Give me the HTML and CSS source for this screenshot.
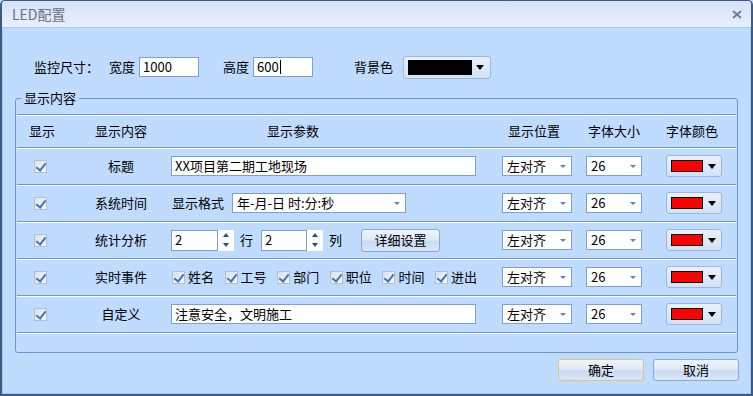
FILE: index.html
```html
<!DOCTYPE html>
<html lang="zh-CN">
<head>
    <meta charset="UTF-8">
    <title>LED配置</title>
    <link rel="stylesheet" href="styles.css">
</head>
<body>
    <div class="window">
        <div class="titlebar">
            <span class="title">LED配置</span>
            <span class="close">
                <svg width="10" height="9" viewBox="0 0 10 9"><path d="M1 1 L9 8 M9 1 L1 8" stroke="#6c7fa2" stroke-width="2" fill="none"/></svg>
            </span>
        </div>

        <div class="body">
            <div class="size-row">
                <span class="lbl-main">监控尺寸：</span>
                <span class="lbl">宽度</span>
                <span class="field w60">1000</span>
                <span class="lbl lbl-h">高度</span>
                <span class="field w60">600<i class="caret"></i></span>
                <span class="lbl lbl-bg">背景色</span>
                <span class="color-btn big"><i class="swatch black"></i><i class="tri"></i></span>
            </div>

            <fieldset class="group">
                <legend>显示内容</legend>
                <div class="table">
                    <div class="row head">
                        <div class="h1">显示</div>
                        <div class="c2">显示内容</div>
                        <div class="h3">显示参数</div>
                        <div class="h4">显示位置</div>
                        <div class="h5">字体大小</div>
                        <div>字体颜色</div>
                    </div>

                    <div class="row">
                        <div class="c1"><span class="cb"></span></div>
                        <div class="c2">标题</div>
                        <div class="c3"><span class="field w305">XX项目第二期工地现场</span></div>
                        <div><span class="select w70"><span>左对齐</span><i class="arr"></i></span></div>
                        <div><span class="select w56"><span>26</span><i class="arr"></i></span></div>
                        <div><span class="color-btn"><i class="swatch red"></i><i class="tri"></i></span></div>
                    </div>

                    <div class="row">
                        <div class="c1"><span class="cb"></span></div>
                        <div class="c2">系统时间</div>
                        <div class="c3">
                            <span class="fmt-lbl">显示格式</span>
                            <span class="select w174"><span>年-月-日 时:分:秒</span><i class="arr"></i></span>
                        </div>
                        <div><span class="select w70"><span>左对齐</span><i class="arr"></i></span></div>
                        <div><span class="select w56"><span>26</span><i class="arr"></i></span></div>
                        <div><span class="color-btn"><i class="swatch red"></i><i class="tri"></i></span></div>
                    </div>

                    <div class="row">
                        <div class="c1"><span class="cb"></span></div>
                        <div class="c2">统计分析</div>
                        <div class="c3">
                            <span class="spin"><span class="field w47">2</span><span class="spin-btns"><i class="up"></i><i class="down"></i></span></span>
                            <span class="unit">行</span>
                            <span class="spin"><span class="field w46">2</span><span class="spin-btns"><i class="up"></i><i class="down"></i></span></span>
                            <span class="unit">列</span>
                            <span class="btn small">详细设置</span>
                        </div>
                        <div><span class="select w70"><span>左对齐</span><i class="arr"></i></span></div>
                        <div><span class="select w56"><span>26</span><i class="arr"></i></span></div>
                        <div><span class="color-btn"><i class="swatch red"></i><i class="tri"></i></span></div>
                    </div>

                    <div class="row">
                        <div class="c1"><span class="cb"></span></div>
                        <div class="c2">实时事件</div>
                        <div class="c3 checks">
                            <span class="chk"><span class="cb"></span>姓名</span>
                            <span class="chk"><span class="cb"></span>工号</span>
                            <span class="chk"><span class="cb"></span>部门</span>
                            <span class="chk"><span class="cb"></span>职位</span>
                            <span class="chk"><span class="cb"></span>时间</span>
                            <span class="chk"><span class="cb"></span>进出</span>
                        </div>
                        <div><span class="select w70"><span>左对齐</span><i class="arr"></i></span></div>
                        <div><span class="select w56"><span>26</span><i class="arr"></i></span></div>
                        <div><span class="color-btn"><i class="swatch red"></i><i class="tri"></i></span></div>
                    </div>

                    <div class="row">
                        <div class="c1"><span class="cb"></span></div>
                        <div class="c2">自定义</div>
                        <div class="c3"><span class="field w305">注意安全，文明施工</span></div>
                        <div><span class="select w70"><span>左对齐</span><i class="arr"></i></span></div>
                        <div><span class="select w56"><span>26</span><i class="arr"></i></span></div>
                        <div><span class="color-btn"><i class="swatch red"></i><i class="tri"></i></span></div>
                    </div>
                </div>
            </fieldset>

            <div class="actions">
                <span class="btn big default">确定</span>
                <span class="btn big">取消</span>
            </div>
        </div>
    </div>
</body>
</html>
```

FILE: styles.css
```css
* {
    box-sizing: border-box;
}

body {
    margin: 0;
    font-family: "Noto Sans CJK SC", sans-serif;
    font-size: 13px;
    line-height: 16px;
    color: #000;
    background: #bfdbfe;
}

.window {
    width: 753px;
    height: 396px;
    border: solid #3b5b86;
    border-width: 1px 2px 2px 2px;
    border-radius: 5px 5px 0 0;
    display: flex;
    flex-direction: column;
    overflow: hidden;
    background: #bfdbfe;
}

.titlebar {
    height: 27px;
    flex: none;
    border-bottom: 1px solid #a9c7ec;
    background: linear-gradient(#d4e2f6, #e8f0fb);
    display: flex;
    align-items: center;
    justify-content: space-between;
    padding: 0 9px 0 10px;
}

.title {
    color: #6a7184;
    font-size: 14px;
}

.close svg {
    display: block;
}

.body {
    flex: 1;
    border: 1px solid #a7c6ec;
    border-top: 0;
    display: flex;
    flex-direction: column;
}

/* top size row */
.size-row {
    display: flex;
    align-items: center;
    height: 20px;
    margin: 29px 0 0 31px;
}

.lbl-main {
    margin-right: 10px;
}

.lbl {
    margin-right: 4px;
}

.lbl-h {
    margin-left: 24px;
}

.lbl-bg {
    margin-left: 41px;
    margin-right: 10px;
}

.field {
    display: inline-flex;
    align-items: center;
    height: 20px;
    border: 1px solid #7aa0d6;
    background: #fff;
    padding-left: 3px;
    white-space: nowrap;
}

.w60 { width: 60px; }
.w305 { width: 305px; }
.w47 { width: 47px; }
.w46 { width: 46px; }

.caret {
    width: 1px;
    height: 14px;
    background: #000;
    margin-left: 1px;
}

/* colour picker buttons */
.color-btn {
    display: inline-flex;
    align-items: center;
    width: 56px;
    height: 22px;
    border: 1px solid #9db6d9;
    border-radius: 3px;
    background: linear-gradient(#e9f1fc, #d2e2f6);
    padding-left: 4px;
}

.color-btn.big {
    width: 88px;
    height: 23px;
}

.swatch {
    width: 32px;
    height: 12px;
    border: 1px solid #000;
}

.swatch.red {
    background: #ff0000;
}

.swatch.black {
    width: 64px;
    height: 15px;
    background: #000;
}

.tri {
    margin-left: 5px;
    border-left: 4px solid transparent;
    border-right: 4px solid transparent;
    border-top: 5px solid #000;
}

.big .tri {
    margin-left: 4px;
}

/* group box */
.group {
    margin: 14px 12px 0 12px;
    padding: 0 0 19px 0;
    border: 1px solid #6d95cf;
    border-radius: 3px;
    min-width: 0;
}

.group legend {
    margin-left: 5px;
    padding: 0 3px;
    line-height: 14px;
}

.table {
    margin: 9px 1px 0 1px;
}

.row {
    display: grid;
    grid-template-columns: 46px 108px 331px 84px 80px 1fr;
    align-items: center;
    height: 37px;
    border-bottom: 1px solid #6e96cf;
    box-shadow: 0 1px 0 #fff;
}

.row.head {
    height: 34px;
    border-top: 1px solid #6e96cf;
    box-shadow: 0 1px 0 #fff, inset 0 1px 0 #fff;
}

.h1 { padding-left: 12px; }
.h3 { padding-left: 96px; }
.h4 { padding-left: 6px; }
.h5 { padding-left: 2px; }

.c1 {
    display: flex;
    padding-left: 17px;
}

.c2 {
    text-align: center;
    padding-left: 8px;
}

.c3 {
    display: flex;
    align-items: center;
}

/* checkboxes */
.cb {
    position: relative;
    display: inline-block;
    width: 13px;
    height: 13px;
    border: 1px solid #b2bfd0;
    background: linear-gradient(135deg, #dce1e8, #f6f8fa);
}

.cb::after {
    content: "";
    position: absolute;
    left: 3px;
    top: 0;
    width: 4px;
    height: 8px;
    border: solid #4672b8;
    border-width: 0 2px 2px 0;
    transform: rotate(38deg);
}

.checks {
    gap: 10.6px;
    padding-left: 1px;
}

.chk {
    display: inline-flex;
    align-items: center;
}

.chk .cb {
    margin-right: 3px;
}

/* dropdowns */
.select {
    display: inline-flex;
    align-items: center;
    justify-content: space-between;
    height: 20px;
    border: 1px solid #7aa0d6;
    background: #fff;
    padding: 0 5px 0 4px;
    white-space: nowrap;
}

.w70 { width: 70px; }
.w56 { width: 56px; }
.w174 { width: 174px; }

.arr {
    border-left: 3px solid transparent;
    border-right: 3px solid transparent;
    border-top: 3px solid #6a7fb2;
}

.fmt-lbl {
    margin: 0 8px 0 1px;
}

/* spin boxes */
.spin {
    display: inline-flex;
    height: 21px;
}

.spin .field {
    height: 21px;
}

.spin-btns {
    width: 16px;
    background: #fff;
    display: flex;
    flex-direction: column;
    align-items: center;
    justify-content: space-between;
    padding: 3px 0 4px;
}

.up {
    border-left: 3px solid transparent;
    border-right: 3px solid transparent;
    border-bottom: 4px solid #1f4f96;
}

.down {
    border-left: 3px solid transparent;
    border-right: 3px solid transparent;
    border-top: 4px solid #1f4f96;
}

.unit {
    margin: 0 8px 0 6px;
}

/* buttons */
.btn {
    display: inline-flex;
    align-items: center;
    justify-content: center;
    border: 1px solid #8ba7cf;
    border-radius: 3px;
    background: linear-gradient(#eef4fc 0%, #dfeaf8 45%, #c9dbf3 55%, #d9e6f7 100%);
}

.btn.small {
    width: 79px;
    height: 23px;
    margin-left: 11px;
}

.btn.big {
    width: 86px;
    height: 22px;
}

.btn.default {
    border-color: #e2c56e;
}

.actions {
    display: flex;
    justify-content: flex-end;
    gap: 9px;
    margin: 6px 11px 0 0;
}
```
